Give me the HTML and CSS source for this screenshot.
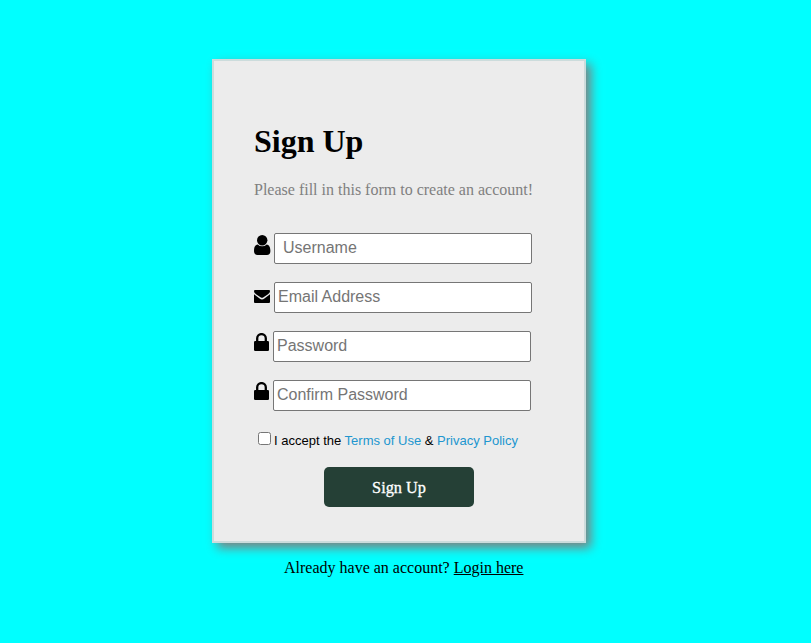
FILE: index.html
```html
<!DOCTYPE html>
<html lang="en">
<head>
<meta charset="utf-8">
<title>Sign Up</title>
<link rel="stylesheet" href="styles.css">
</head>
<body>
<form class="card">
  <h1>Sign Up</h1>
  <p class="intro">Please fill in this form to create an account!</p>
  <div class="field">
    <svg class="icon user" viewBox="0 0 17 20"><circle cx="8.200" cy="5.200" r="5.200"/><path d="M3.700 9.400C1 9.800 0 12.500 0 16c0 2.500 1.400 4 3.500 4h9.400c2.200 0 3.500-1.500 3.500-4 0-3.500-1-6.200-3.700-6.600a6.300 6.300 0 0 1-9 0Z"/></svg>
    <input class="padded" type="text" placeholder="Username">
  </div>
  <div class="field">
    <svg class="icon mail" viewBox="0 0 16 13"><path d="M1 0h14A1 1 0 0 1 16 1C16 2.500 15 3.500 14 4.200L9.500 7.300Q8 8.300 6.500 7.300L2 4.200C1 3.500 0 2.500 0 1A1 1 0 0 1 1 0ZM0 4.300 5.600 8.600Q8 10.400 10.400 8.600L16 4.300V12A1 1 0 0 1 15 13h-14A1 1 0 0 1 0 12Z"/></svg>
    <input type="text" placeholder="Email Address">
  </div>
  <div class="field">
    <svg class="icon lock" viewBox="0 0 15 18"><path d="M3.200 9V5.300a4.300 4.200 0 0 1 8.600 0V9" fill="none" stroke="#000" stroke-width="2.300"/><rect y="8" width="15" height="10" rx="1.200"/></svg>
    <input type="password" placeholder="Password">
  </div>
  <div class="field">
    <svg class="icon lock" viewBox="0 0 15 18"><path d="M3.200 9V5.300a4.300 4.200 0 0 1 8.600 0V9" fill="none" stroke="#000" stroke-width="2.300"/><rect y="8" width="15" height="10" rx="1.200"/></svg>
    <input type="password" placeholder="Confirm Password">
  </div>
  <label class="terms"><input type="checkbox"><span>I accept the <a href="#">Terms of Use</a> &amp; <a href="#">Privacy Policy</a></span></label>
  <button type="button">Sign Up</button>
</form>
<p class="login">Already have an account? <a href="#">Login here</a></p>
</body>
</html>
```
FILE: styles.css
```css
* { box-sizing: border-box; }
body {
  margin: 0;
  padding-top: 59px;
  background: #00ffff;
  font-family: "Liberation Serif", serif;
}
.card {
  width: 374px;
  height: 484px;
  margin-left: 212px;
  padding: 62px 40px 0;
  display: flex;
  flex-direction: column;
  background: #ececec;
  border: 2px solid #ccdcdc;
  box-shadow: 5px 5px 10px #808080;
}
h1 {
  margin: 0;
  font-size: 32px;
  line-height: 37px;
}
.intro {
  margin: 21px 0 0;
  font-size: 16px;
  line-height: 18px;
  color: #808080;
  white-space: nowrap;
}
.field {
  display: flex;
  height: 31px;
  margin-bottom: 18px;
}
.intro + .field { margin-top: 34px; }
.icon { flex: none; }
.user { width: 17px; height: 20px; margin: 2px 3px 0 0; }
.mail { width: 16px; height: 13px; margin: 8px 4px 0 0; }
.lock { width: 15px; height: 18px; margin: 2px 4px 0 0; }
.field input {
  width: 258px;
  height: 31px;
  padding: 0 3px 1px;
  border: 1px solid #767676;
  border-radius: 2px;
  background: #fff;
  font: 16px "Liberation Sans", sans-serif;
}
.field .padded { padding-left: 8px; }
.field input::placeholder { color: #757575; }
.terms {
  display: flex;
  height: 18px;
  margin-top: 2px;
  font: 13px/20px "Liberation Sans", sans-serif;
  white-space: nowrap;
}
.terms input {
  width: 13px;
  height: 13px;
  margin: 1px 3px 0 4px;
}
.terms a {
  color: #2196cf;
  text-decoration: none;
}
button {
  align-self: center;
  width: 150px;
  height: 40px;
  margin: 18px 0 0;
  padding: 2px 0 0;
  border: 0;
  border-radius: 5px;
  background: #254036;
  color: #fff;
  font: 16.3px "Liberation Serif", serif;
  -webkit-text-stroke: 0.3px #fff;
}
.login {
  margin: 16px 0 0 284px;
  font-size: 16px;
  line-height: 18px;
}
.login a { color: #000; }
```
